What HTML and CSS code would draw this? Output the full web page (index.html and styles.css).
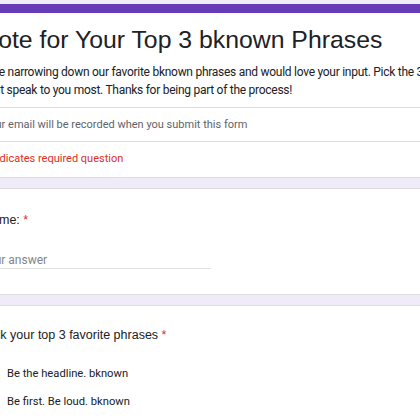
FILE: index.html
```html
<!DOCTYPE html>
<html lang="en">
<head>
<meta charset="utf-8">
<title>Vote for Your Top 3 bknown Phrases</title>
<link rel="stylesheet" href="styles.css">
</head>
<body>
<div class="page">
  <section class="card header-card">
    <div class="header-main">
      <h1 class="title">Vote for Your Top 3 bknown Phrases</h1>
      <p class="desc">We're narrowing down our favorite bknown phrases and would love your input. Pick the 3<br>that speak to you most. Thanks for being part of the process!</p>
    </div>
    <div class="row email">Your email will be recorded when you submit this form</div>
    <div class="row required">* Indicates required question</div>
  </section>

  <section class="card question-card name-card">
    <div class="q-title">Name: <span class="star">*</span></div>
    <div class="answer">Your answer</div>
  </section>

  <section class="card question-card pick-card">
    <div class="q-title">Pick your top 3 favorite phrases <span class="star">*</span></div>
    <ul class="options">
      <li class="option"><span class="box"></span><span class="opt-text">Be the headline. bknown</span></li>
      <li class="option"><span class="box"></span><span class="opt-text">Be first. Be loud. bknown</span></li>
    </ul>
  </section>
</div>
</body>
</html>
```

FILE: styles.css
```css
html, body {
  margin: 0;
  padding: 0;
}
body {
  background: #f0ebf8;
  overflow: hidden;
  width: 420px;
  height: 420px;
  font-family: Roboto, "Liberation Sans", Arial, sans-serif;
  color: #202124;
}
.page {
  padding-top: 4px;
  margin-left: -42px;
  width: 540px;
}
.card {
  background: #fff;
  border: 1px solid #dadce0;
  border-radius: 8px;
  margin-bottom: 10px;
}
.header-card {
  border-top: 9px solid #673ab7;
}
.header-main {
  padding: 11px 24px 8px;
  border-bottom: 1px solid #dadce0;
}
.title {
  margin: 0;
  font-family: "Liberation Sans", Arial, sans-serif;
  font-weight: 400;
  font-size: 24.8px;
  line-height: 32px;
  color: #202124;
}
.desc {
  margin: 7px 0 0 1px;
  text-indent: -7px;
  font-size: 12px;
  letter-spacing: -0.27px;
  line-height: 18px;
  color: #202124;
  white-space: nowrap;
}
.row {
  padding: 8px 24px;
  font-size: 11px;
  line-height: 17px;
}
.email {
  color: #5f6368;
  border-bottom: 1px solid #dadce0;
}
.required {
  color: #d93025;
  padding-bottom: 9px;
  line-height: 18px;
}
.question-card {
  padding: 0 24px;
}
.name-card {
  padding-top: 21px;
  padding-bottom: 25px;
}
.pick-card {
  padding-top: 19px;
  padding-bottom: 20px;
}
.q-title {
  font-family: "Liberation Sans", Arial, sans-serif;
  font-size: 12.5px;
  line-height: 20px;
  color: #202124;
}
.star {
  color: #d93025;
}
.answer {
  margin: 22px 0 0 -2px;
  width: 230px;
  font-size: 12px;
  line-height: 16px;
  color: #80868b;
  border-bottom: 1px solid #e0e0e0;
}
.options {
  list-style: none;
  margin: 14px 0 0;
  padding: 0;
}
.option {
  display: flex;
  align-items: center;
  height: 28px;
  font-size: 11.2px;
}
.box {
  width: 12px;
  height: 12px;
  border: 2px solid #5f6368;
  border-radius: 2px;
  margin-right: 8px;
  flex: none;
}
.opt-text {
  color: #202124;
}
```
